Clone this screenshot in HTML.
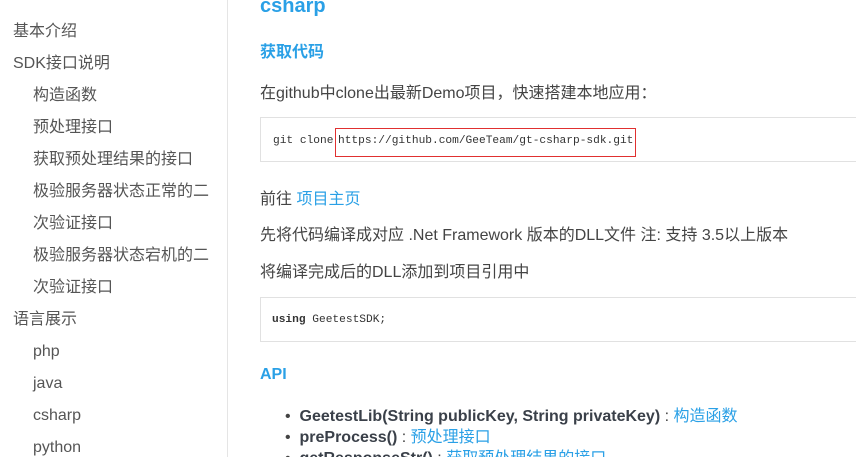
<!DOCTYPE html>
<html><head><meta charset="utf-8"><style>
*{margin:0;padding:0;box-sizing:border-box}
html,body{width:856px;height:457px;overflow:hidden}
body{background:#fff;font-family:"Liberation Sans","Noto Sans CJK SC",sans-serif;position:relative;color:#555}
.a{position:absolute;white-space:nowrap;line-height:20px}
.side{position:absolute;left:227px;top:0;width:1px;height:457px;background:#e5e5e5}
.s{font-size:16px;color:#555}
.h{color:#2aa0e6;font-weight:bold}
.p{font-size:16px;color:#444}
.lk{color:#2aa0e6}
.code{position:absolute;left:260px;width:620px;border:1px solid #e1e1e1;background:#fff;font-family:"Liberation Mono",monospace;font-size:11.2px;color:#333}
.li{font-size:16px;color:#444}
.li b{color:#3a4049}
</style></head><body>
<div class="side"></div>
<div class="a s" style="left:13px;top:22px">基本介绍</div>
<div class="a s" style="left:13px;top:54px">SDK接口说明</div>
<div class="a s" style="left:33px;top:86px">构造函数</div>
<div class="a s" style="left:33px;top:118px">预处理接口</div>
<div class="a s" style="left:33px;top:150px">获取预处理结果的接口</div>
<div class="a s" style="left:33px;top:182px">极验服务器状态正常的二</div>
<div class="a s" style="left:33px;top:214px">次验证接口</div>
<div class="a s" style="left:33px;top:246px">极验服务器状态宕机的二</div>
<div class="a s" style="left:33px;top:278px">次验证接口</div>
<div class="a s" style="left:13px;top:310px">语言展示</div>
<div class="a s" style="left:33px;top:342px">php</div>
<div class="a s" style="left:33px;top:374px">java</div>
<div class="a s" style="left:33px;top:406px">csharp</div>
<div class="a s" style="left:33px;top:438px">python</div>

<div class="a h" style="left:260px;top:-4px;font-size:20px">csharp</div>
<div class="a h" style="left:260px;top:43px;font-size:16px">获取代码</div>
<div class="a p" style="left:260px;top:84px">在github中clone出最新Demo项目，快速搭建本地应用：</div>
<div class="code" style="top:117px;height:45px">
 <span class="a" style="left:12px;top:13px">git clone</span>
 <span class="a" style="left:74px;top:10px;width:301px;height:29px;border:1px solid #e03030"></span>
 <span class="a" style="left:77px;top:13px">https://github.com/GeeTeam/gt-csharp-sdk.git</span>
</div>
<div class="a p" style="left:260px;top:190px">前往 <span class="lk">项目主页</span></div>
<div class="a p" style="left:260px;top:226px">先将代码编译成对应 .Net Framework 版本的DLL文件 注: 支持 3.5以上版本</div>
<div class="a p" style="left:260px;top:263px">将编译完成后的DLL添加到项目引用中</div>
<div class="code" style="top:297px;height:45px">
 <span class="a" style="left:11px;top:12px"><b>using</b> GeetestSDK;</span>
</div>
<div class="a h" style="left:260px;top:365px;font-size:16px">API</div>
<div class="a li" style="left:285px;top:407px">•&nbsp;&nbsp;<b>GeetestLib(String publicKey, String privateKey)</b> : <span class="lk">构造函数</span></div>
<div class="a li" style="left:285px;top:428px">•&nbsp;&nbsp;<b>preProcess()</b> : <span class="lk">预处理接口</span></div>
<div class="a li" style="left:285px;top:449px">•&nbsp;&nbsp;<b>getResponseStr()</b> : <span class="lk">获取预处理结果的接口</span></div>
</body></html>
